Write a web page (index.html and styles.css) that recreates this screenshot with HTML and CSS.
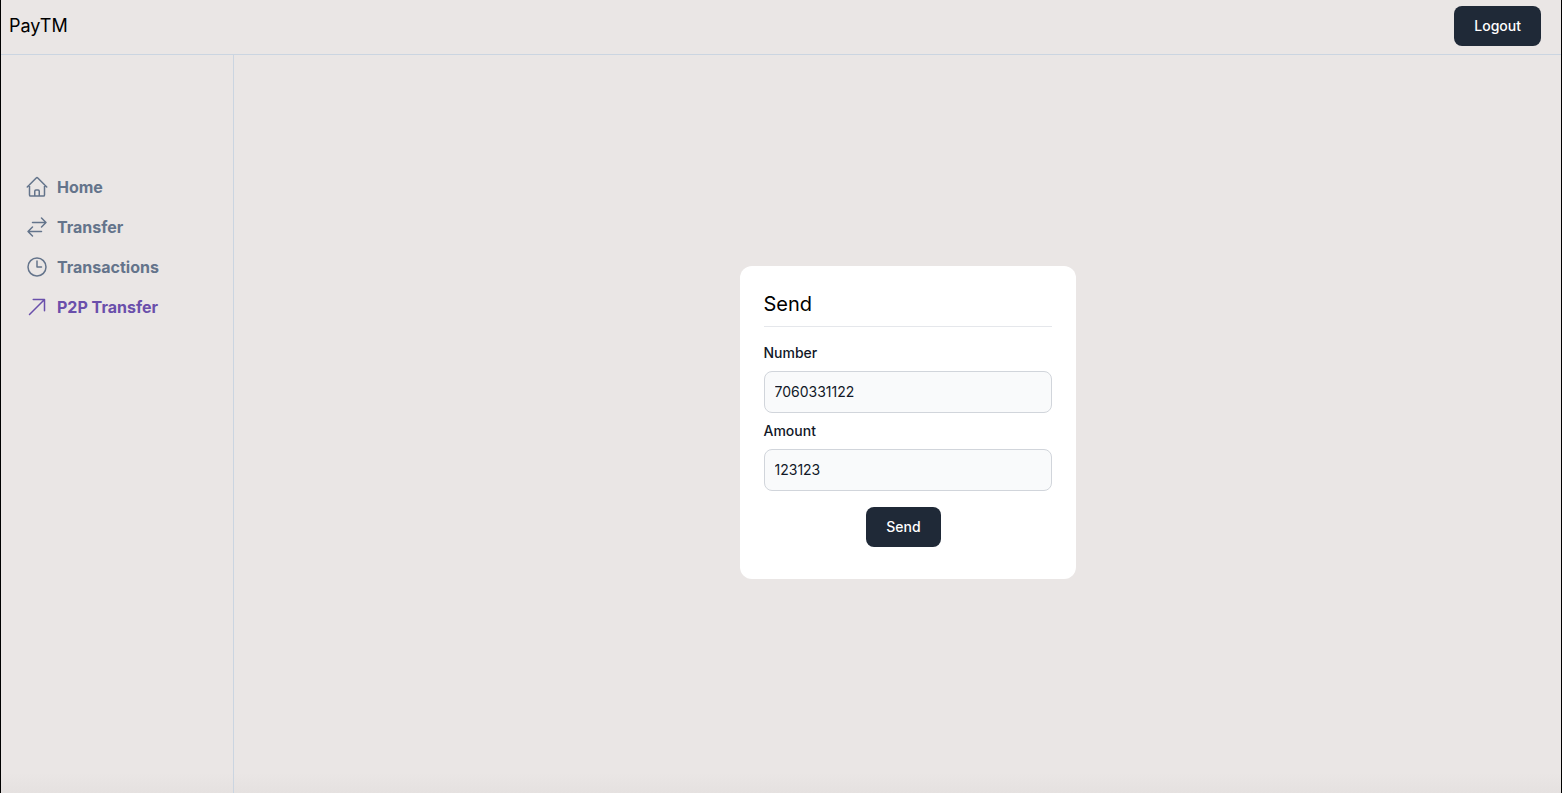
FILE: index.html
```html
<!DOCTYPE html>
<html lang="en">
<head>
<meta charset="utf-8">
<meta name="viewport" content="width=device-width, initial-scale=1">
<title>PayTM</title>
<link rel="stylesheet" href="styles.css">
</head>
<body>
<div class="app">
  <header class="topbar">
    <div class="brand">PayTM</div>
    <button type="button" class="btn">Logout</button>
  </header>
  <div class="layout">
    <nav class="sidebar" aria-label="Main">
      <a class="nav-item" href="#home">
        <svg class="icon" viewBox="0 0 24 24" aria-hidden="true"><path d="m2.25 12 8.954-8.955c.44-.439 1.152-.439 1.591 0L21.75 12M4.5 9.75v10.125c0 .621.504 1.125 1.125 1.125H9.75v-4.875c0-.621.504-1.125 1.125-1.125h2.25c.621 0 1.125.504 1.125 1.125V21h4.125c.621 0 1.125-.504 1.125-1.125V9.75M8.25 21h8.25"/></svg>
        <span>Home</span>
      </a>
      <a class="nav-item" href="#transfer">
        <svg class="icon" viewBox="0 0 24 24" aria-hidden="true"><path d="M7.5 21 3 16.5m0 0L7.5 12M3 16.5h13.5m0-13.5L21 7.5m0 0L16.5 12M21 7.5H7.5"/></svg>
        <span>Transfer</span>
      </a>
      <a class="nav-item" href="#transactions">
        <svg class="icon" viewBox="0 0 24 24" aria-hidden="true"><path d="M12 6v6h4.5m4.5 0a9 9 0 1 1-18 0 9 9 0 0 1 18 0Z"/></svg>
        <span>Transactions</span>
      </a>
      <a class="nav-item active" href="#p2p" aria-current="page">
        <svg class="icon" viewBox="0 0 24 24" aria-hidden="true"><path d="m4.5 19.5 15-15m0 0H8.25m11.25 0v11.25"/></svg>
        <span>P2P Transfer</span>
      </a>
    </nav>
    <main class="content">
      <form class="card">
        <h1 class="card-title">Send</h1>
        <div class="fields">
          <div class="field">
            <label for="number">Number</label>
            <input id="number" type="text" value="7060331122">
          </div>
          <div class="field">
            <label for="amount">Amount</label>
            <input id="amount" type="text" value="123123">
          </div>
        </div>
        <div class="actions">
          <button type="button" class="btn">Send</button>
        </div>
      </form>
    </main>
  </div>
</div>
</body>
</html>
```
FILE: styles.css
```css
*, *::before, *::after {
  box-sizing: border-box;
}

body {
  margin: 0;
  font-family: Inter, "Liberation Sans", sans-serif;
  color: #000;
  background: #eae6e5;
}

.app {
  display: flex;
  flex-direction: column;
  min-height: 100vh;
  border: solid #000;
  border-width: 0 1px;
  background: linear-gradient(to top, #e5e1e0, #eae6e5 20px);
}

.topbar {
  display: flex;
  justify-content: space-between;
  align-items: center;
  padding: 6px 20px 8px 8px;
  border-bottom: 1px solid #cbd5e1;
}

.brand {
  font-size: 18px;
  line-height: 28px;
}

.btn {
  padding: 10px 20px;
  border: 0;
  border-radius: 8px;
  background: #1f2937;
  color: #fff;
  font: 500 14px/20px Inter, "Liberation Sans", sans-serif;
  cursor: pointer;
}

.layout {
  display: flex;
  flex: 1;
}

.sidebar {
  flex: none;
  width: 233px;
  padding-top: 112px;
  border-right: 1px solid #cbd5e1;
}

.nav-item {
  display: flex;
  align-items: center;
  gap: 8px;
  padding: 8px 8px 8px 24px;
  color: #64748b;
  font-size: 16px;
  font-weight: 700;
  line-height: 24px;
  text-decoration: none;
}

.nav-item.active {
  color: #6a4fab;
}

.icon {
  width: 24px;
  height: 24px;
  fill: none;
  stroke: currentColor;
  stroke-width: 1.5;
  stroke-linecap: round;
  stroke-linejoin: round;
}

.content {
  display: flex;
  flex: 1;
  justify-content: center;
  align-items: center;
  padding: 0 0 4px 20px;
}

.card {
  width: 336px;
  padding: 24px;
  border-radius: 12px;
  background: #fff;
}

.card-title {
  margin: 0;
  padding-bottom: 8px;
  border-bottom: 1px solid #e5e7eb;
  font-size: 20px;
  font-weight: 400;
  line-height: 28px;
}

.fields {
  display: grid;
  gap: 8px;
  padding: 16px 0;
}

.field {
  display: grid;
  gap: 8px;
}

.field label {
  color: #111827;
  font-size: 14px;
  font-weight: 500;
  line-height: 20px;
}

.field input {
  width: 100%;
  height: 42px;
  padding: 10px;
  border: 1px solid #d1d5db;
  border-radius: 8px;
  background: #f9fafb;
  color: #111827;
  font: 400 14px/20px Inter, "Liberation Sans", sans-serif;
}

.actions {
  display: flex;
  justify-content: center;
  padding: 0 8px 8px 0;
}
```
